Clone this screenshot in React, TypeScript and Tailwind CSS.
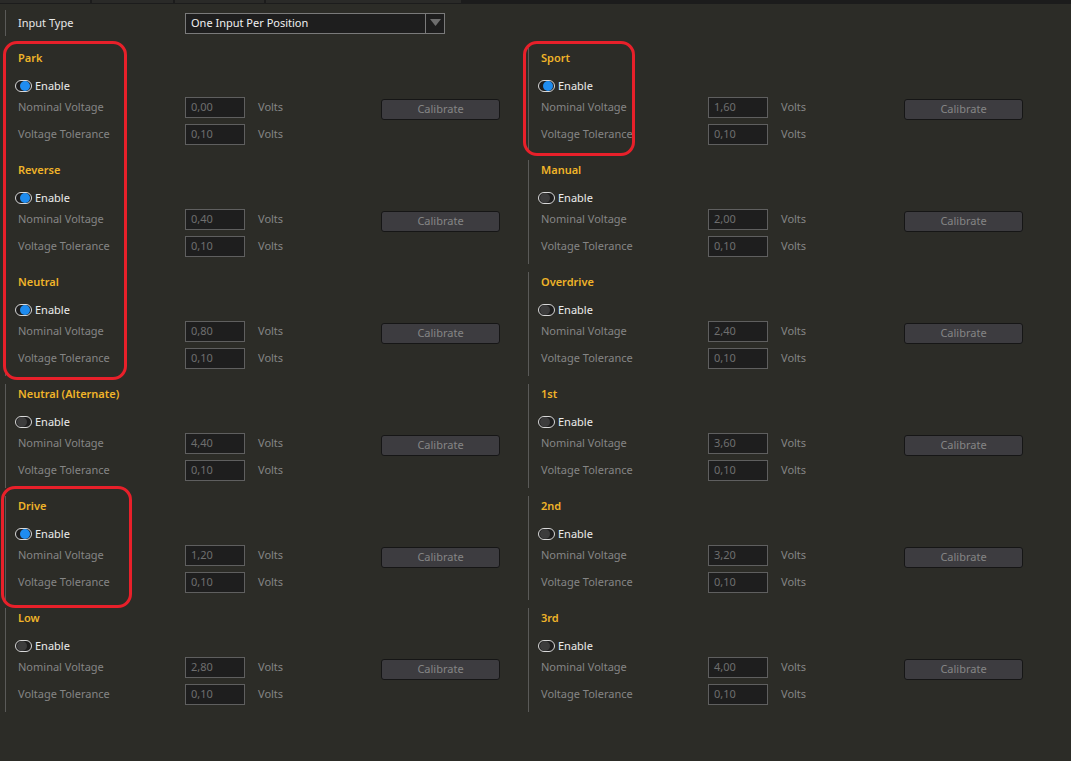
const sections: [string, string, boolean][] = [
  ["Park", "0,00", true],
  ["Reverse", "0,40", true],
  ["Neutral", "0,80", true],
  ["Neutral (Alternate)", "4,40", false],
  ["Drive", "1,20", true],
  ["Low", "2,80", false],
];

const rightSections: [string, string, boolean][] = [
  ["Sport", "1,60", true],
  ["Manual", "2,00", false],
  ["Overdrive", "2,40", false],
  ["1st", "3,60", false],
  ["2nd", "3,20", false],
  ["3rd", "4,00", false],
];

function Toggle({ on }: { on: boolean }) {
  return (
    <span
      className={
        "flex h-[12px] w-[17px] items-center rounded-full border border-[#d8d8d8] px-[1px] bg-[#1e1e1e] " +
        (on ? "justify-end" : "justify-start")
      }
    >
      <span
        className={
          "h-[10px] w-[10px] rounded-full " + (on ? "bg-[#1e8cf0]" : "bg-[#3c3c3c]")
        }
      />
    </span>
  );
}

function Field({ value }: { value: string }) {
  return (
    <div className="flex h-[21px] w-[60px] items-center border border-[#5f5f5f] bg-[#1e1e1e] pl-[5px] text-[#6e6e6e]">
      {value}
    </div>
  );
}

function Section({ title, nominal, on }: { title: string; nominal: string; on: boolean }) {
  return (
    <div className="flex h-[104px] flex-col border-l border-[#5a5a58] pl-[12px]">
      <div className="flex h-[20px] items-center font-semibold text-[#f0b429]">{title}</div>
      <div className="-ml-[3px] mt-[10px] flex h-[16px] items-center gap-[3px] text-[#ececec]">
        <Toggle on={on} />
        <span>Enable</span>
      </div>
      <div className="mt-[3px] flex h-[21px] items-center">
        <span className="w-[167px] text-[#858585]">Nominal Voltage</span>
        <Field value={nominal} />
        <span className="ml-[13px] w-[123px] text-[#858585]">Volts</span>
        <button className="flex h-[21px] w-[119px] translate-y-[2px] items-center justify-center rounded-[3px] border border-[#161616] bg-[#3d3c40] text-[#858585]">
          Calibrate
        </button>
      </div>
      <div className="mt-[6px] flex h-[21px] items-center">
        <span className="w-[167px] text-[#858585]">Voltage Tolerance</span>
        <Field value="0,10" />
        <span className="ml-[13px] text-[#858585]">Volts</span>
      </div>
    </div>
  );
}

export default function App() {
  return (
    <div
      className="relative h-[761px] w-[1071px] overflow-hidden bg-[#2c2c27] text-[11px]"
      style={{ fontFamily: '"Noto Sans", "Open Sans", sans-serif' }}
    >
      <div className="flex h-[4px] gap-[2px] bg-[#1c1c1c]">
        <div className="h-[3px] w-[90px] bg-[#2a2a28]" />
        <div className="h-[3px] w-[81px] bg-[#2a2a28]" />
        <div className="h-[3px] w-[89px] bg-[#2a2a28]" />
        <div className="h-[3px] w-[195px] bg-[#2a2a28]" />
      </div>

      <div className="pl-[5px] pt-[6px]">
        <div className="flex h-[26px] items-center border-l border-[#5a5a58] pl-[12px]">
          <span className="w-[167px] text-[#e8e8e8]">Input Type</span>
          <div className="flex h-[21px] w-[260px] items-center border border-[#7a7a7a] bg-[#1e1e1e]">
            <span className="flex-1 pl-[5px] text-[#f0f0f0]">One Input Per Position</span>
            <span className="flex h-full w-[19px] items-center justify-center border-l border-[#7a7a7a]">
              <svg width="11" height="8" viewBox="0 0 11 8">
                <path d="M0 0 L11 0 L5.5 7 Z" fill="#6e6e6e" />
              </svg>
            </span>
          </div>
        </div>

        <div className="mt-[12px] flex">
          <div className="flex w-[523px] flex-col gap-[8px]">
            {sections.map(([t, n, o]) => (
              <Section key={t} title={t} nominal={n} on={o} />
            ))}
          </div>
          <div className="flex w-[523px] flex-col gap-[8px]">
            {rightSections.map(([t, n, o]) => (
              <Section key={t} title={t} nominal={n} on={o} />
            ))}
          </div>
        </div>
      </div>

      {/* red annotation outlines */}
      <div className="pointer-events-none absolute left-[3px] top-[41px] h-[339px] w-[124px] rounded-[14px] border-[3px] border-[#e8202a]" />
      <div className="pointer-events-none absolute left-[523px] top-[41px] h-[115px] w-[112px] rounded-[14px] border-[3px] border-[#e8202a]" />
      <div className="pointer-events-none absolute left-[1px] top-[486px] h-[122px] w-[131px] rounded-[14px] border-[3px] border-[#e8202a]" />
    </div>
  );
}
